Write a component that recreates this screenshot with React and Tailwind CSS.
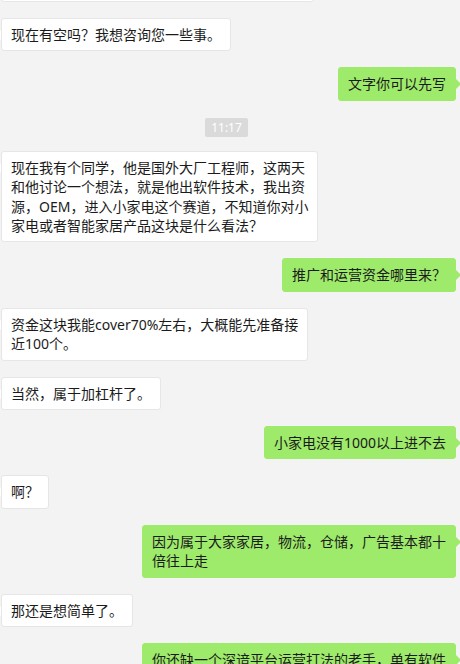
import React from "react";

const FONT = { fontFamily: '"Noto Sans", "Noto Sans CJK SC", sans-serif' };

function Left({ children }) {
  return (
    <div className="flex justify-start">
      <div className="relative whitespace-nowrap rounded-[3px] border border-[#e6e6e6] bg-white px-[9px] py-[6px] text-[14px] leading-[19.4px] text-[#1b1b1b]">
        <span className="absolute left-[-6px] top-[11px] h-0 w-0 border-y-[5px] border-r-[5px] border-y-transparent border-r-white" />
        {children}
      </div>
    </div>
  );
}

function Right({ children }) {
  return (
    <div className="flex justify-end">
      <div className="relative whitespace-nowrap rounded-[3px] border border-[#9eea6a] bg-[#9eea6a] px-[9px] py-[6px] text-[14px] leading-[19.4px] text-[#1b1b1b]">
        <span className="absolute right-[-6px] top-[11px] h-0 w-0 border-y-[5px] border-l-[5px] border-y-transparent border-l-[#9eea6a]" />
        {children}
      </div>
    </div>
  );
}

export default function App() {
  return (
    <div className="h-[664px] w-[460px] overflow-hidden bg-[#f3f3f3]" style={FONT}>
      <div className="mt-[-51px] flex flex-col gap-4 pl-[1px] pr-[4px]">
        <div className="flex justify-start">
          <div className="h-[53px] w-[313px] rounded-[3px] border border-[#e6e6e6] bg-white" />
        </div>
        <Left>现在有空吗？我想咨询您一些事。</Left>
        <Right>文字你可以先写</Right>
        <div className="mt-[1px] mb-[-2px] flex justify-center pr-[4px]">
          <div className="rounded-[2px] bg-[#dadada] px-[6px] text-[12px] leading-[19px] text-white">11:17</div>
        </div>
        <Left>
          现在我有个同学，他是国外大厂工程师，这两天<br />
          和他讨论一个想法，就是他出软件技术，我出资<br />
          源，OEM，进入小家电这个赛道，不知道你对小<br />
          家电或者智能家居产品这块是什么看法？
        </Left>
        <Right>推广和运营资金哪里来？</Right>
        <Left>
          资金这块我能cover70%左右，大概能先准备接<br />
          近100个。
        </Left>
        <Left>当然，属于加杠杆了。</Left>
        <Right>小家电没有1000以上进不去</Right>
        <Left>啊？</Left>
        <Right>
          因为属于大家家居，物流，仓储，广告基本都十<br />
          倍往上走
        </Right>
        <Left>那还是想简单了。</Left>
        <Right>
          你还缺一个深谙平台运营打法的老手，单有软件<br />
          技术和资源是远远不够的。
        </Right>
      </div>
    </div>
  );
}
